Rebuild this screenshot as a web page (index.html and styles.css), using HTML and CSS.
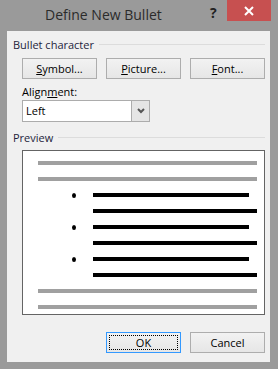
FILE: index.html
```html
<!DOCTYPE html>
<html lang="en">
<head>
    <meta charset="UTF-8">
    <title>Define New Bullet</title>
    <link rel="stylesheet" href="styles.css">
</head>
<body>
    <div class="window">
        <div class="titlebar">
            <span class="title">Define New Bullet</span>
            <span class="help">?</span>
            <span class="close">
                <svg width="10" height="10" viewBox="0 0 10 10">
                    <path d="M1 1 L9 9 M9 1 L1 9" stroke="#fff" stroke-width="2"/>
                </svg>
            </span>
        </div>

        <div class="client">
            <!-- Bullet character -->
            <div class="group-title"><span>Bullet character</span><i class="rule"></i></div>
            <div class="content">
                <div class="btn-row">
                    <button class="btn"><u>S</u>ymbol...</button>
                    <button class="btn"><u>P</u>icture...</button>
                    <button class="btn"><u>F</u>ont...</button>
                </div>
                <div class="field-label">Align<u>m</u>ent:</div>
                <div class="select">
                    <span class="select-value">Left</span>
                    <span class="select-arrow">
                        <svg width="8" height="6" viewBox="0 0 8 6">
                            <path d="M1 1 L4 4 L7 1" stroke="#555" stroke-width="2" fill="none"/>
                        </svg>
                    </span>
                </div>
            </div>

            <!-- Preview -->
            <div class="group-title preview-title"><span>Preview</span><i class="rule"></i></div>
            <div class="content">
                <div class="preview">
                    <div class="line gray"></div>
                    <div class="line gray"></div>
                    <div class="item"><i class="dot"></i><div class="line black short"></div></div>
                    <div class="line black indent"></div>
                    <div class="item"><i class="dot"></i><div class="line black short"></div></div>
                    <div class="line black indent"></div>
                    <div class="item"><i class="dot"></i><div class="line black short"></div></div>
                    <div class="line black indent"></div>
                    <div class="line gray"></div>
                    <div class="line gray"></div>
                </div>

                <div class="btn-row footer">
                    <button class="btn default"><span class="focus">OK</span></button>
                    <button class="btn">Cancel</button>
                </div>
            </div>
        </div>
    </div>
</body>
</html>
```

FILE: styles.css
```css
body {
    margin: 0;
    background-color: #9a9a9a;
    font-family: "Open Sans", "Noto Sans", sans-serif;
    font-size: 11px;
    color: #000;
}

.window {
    width: 278px;
    height: 369px;
    background-color: #9a9a9a;
}

.titlebar {
    height: 31px;
    position: relative;
}

.title {
    position: absolute;
    left: 45px;
    top: 5px;
    font-size: 14px;
    color: #2b2b2b;
}

.help {
    position: absolute;
    left: 210px;
    top: 3px;
    font-size: 14px;
    font-weight: bold;
    color: #222;
}

.close {
    position: absolute;
    left: 227px;
    top: 0;
    width: 44px;
    height: 21px;
    background-color: #c75050;
    display: flex;
    align-items: center;
    justify-content: center;
}

.client {
    margin-left: 7px;
    width: 263px;
    height: 331px;
    background-color: #f0f0f0;
    padding-top: 5px;
    box-sizing: border-box;
}

.group-title {
    display: flex;
    align-items: center;
    height: 16px;
    padding-left: 6px;
    padding-right: 5px;
    color: #1e1e3c;
}

.group-title .rule {
    flex-grow: 1;
    height: 1px;
    background-color: #dcdcdc;
    margin-left: 5px;
    margin-top: 1px;
}

.preview-title {
    margin-top: 7px;
}

.content {
    margin-left: 15px;
    width: 243px;
}

.btn-row {
    display: flex;
    justify-content: flex-end;
    gap: 9px;
    margin-top: 6px;
}

.btn {
    width: 75px;
    height: 21px;
    box-sizing: border-box;
    border: 1px solid #adadad;
    background: linear-gradient(#f2f2f2, #e6e6e6);
    font-family: inherit;
    font-size: 11px;
    color: #000;
    padding: 0;
}

.btn.default {
    border-color: #3399ff;
    padding: 2px;
}

.focus {
    display: flex;
    align-items: center;
    justify-content: center;
    height: 100%;
    border: 1px dotted #000;
    box-sizing: border-box;
}

.field-label {
    margin-top: 5px;
    height: 16px;
    line-height: 16px;
}

.select {
    display: flex;
    width: 128px;
    height: 22px;
    box-sizing: border-box;
    border: 1px solid #acacac;
    background-color: #fff;
}

.select-value {
    flex-grow: 1;
    padding-left: 3px;
    line-height: 20px;
}

.select-arrow {
    width: 17px;
    background-color: #e5e5e5;
    border-left: 1px solid #acacac;
    display: flex;
    align-items: center;
    justify-content: center;
}

.preview {
    margin-top: 5px;
    height: 165px;
    box-sizing: border-box;
    border: 1px solid #646464;
    background-color: #fff;
    padding: 10px 7px 0 15px;
    display: flex;
    flex-direction: column;
    gap: 12px;
}

.line {
    height: 4px;
}

.line.gray {
    background-color: #a0a0a0;
}

.line.black {
    background-color: #000;
}

.line.indent {
    margin-left: 55px;
}

.item {
    display: flex;
    align-items: center;
    height: 4px;
}

.dot {
    width: 4px;
    height: 5px;
    border-radius: 50%;
    background-color: #000;
    margin-left: 34px;
    margin-right: 17px;
}

.line.short {
    width: 156px;
}

.footer {
    margin-top: 17px;
}
```
